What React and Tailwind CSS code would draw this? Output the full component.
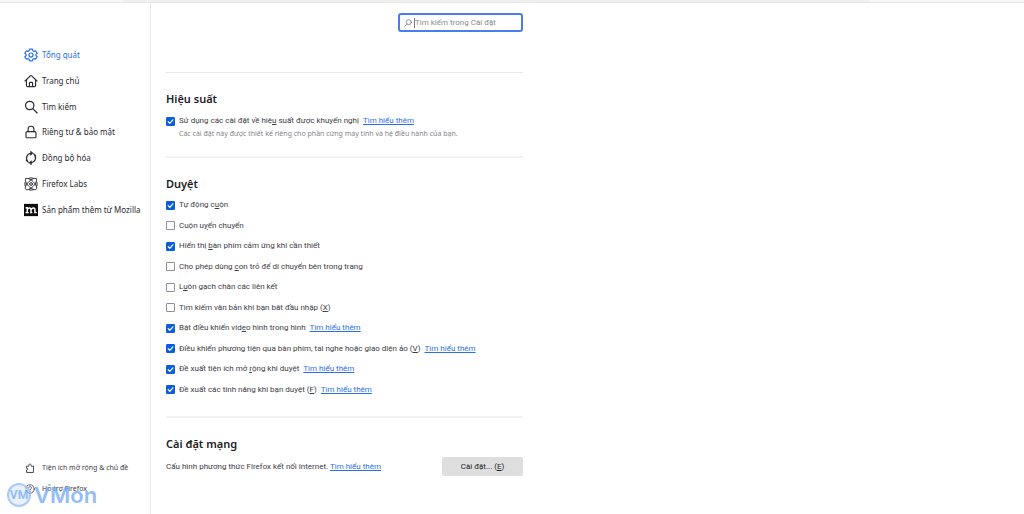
import React from "react";

const stroke = {
  fill: "none",
  stroke: "currentColor",
  strokeLinecap: "round",
  strokeLinejoin: "round",
};

function GearIcon() {
  return (
    <svg viewBox="0 0 16 16" className="size-[14px]" {...stroke} strokeWidth="1.400">
      <path d="M6.4 1.2h3.2l.5 1.9 1.2.7 1.9-.6 1.9 2.8-1.5 1.3v1.4l1.5 1.3-1.9 2.8-1.9-.6-1.2.7-.5 1.9H6.4l-.5-1.9-1.2-.7-1.9.6L.9 10l1.5-1.3V7.300L.9 6l1.900-2.800 1.900.6 1.200-.7z" />
      <circle cx="8" cy="8" r="2.300" />
    </svg>
  );
}

function HomeIcon() {
  return (
    <svg viewBox="0 0 16 16" className="size-[14px]" {...stroke} strokeWidth="1.3">
      <path d="M1.200 8 7.200 2.100a1.200 1.200 0 0 1 1.600 0L14.800 8" />
      <path d="M2.800 7v6.200c0 .8.500 1.300 1.300 1.300h7.800c.8 0 1.300-.5 1.300-1.300V7" />
      <path d="M6.200 14.300v-4c0-.5.300-.8.800-.8h2c.5 0 .8.300.8.800v4" />
    </svg>
  );
}

function SearchIcon() {
  return (
    <svg viewBox="0 0 16 16" className="size-[14px]" {...stroke} strokeWidth="1.4">
      <circle cx="6.500" cy="6.300" r="4.800" />
      <path d="m10 9.800 5 5" />
    </svg>
  );
}

function LockIcon() {
  return (
    <svg viewBox="0 0 16 16" className="size-[14px]" {...stroke} strokeWidth="1.3">
      <rect x="2.300" y="7.600" width="11.400" height="7" rx="1.300" />
      <path d="M4.700 7.500V4.700a3.300 3.300 0 0 1 6.600 0v2.800" />
    </svg>
  );
}

function SyncIcon() {
  return (
    <svg viewBox="0 0 16 16" className="size-[14px]" {...stroke} strokeWidth="1.500">
      <path d="M7.500 2.700a5.400 5.400 0 0 0-4 8M8.500 13.300a5.400 5.400 0 0 0 4-8" />
      <path d="M7.500.4v4.600L10.300 2.700zM8.500 15.600V11l-2.800 2.300z" fill="currentColor" strokeWidth=".6" />
      <path d="M2.800 10.600 4.800 12.700M13.200 5.400l-2-2.100" />
    </svg>
  );
}

function LabsIcon() {
  return (
    <svg viewBox="0 0 16 16" className="size-[14px]" {...stroke} strokeWidth="1.100">
      <path d="M2 2c1.500-1.500 5.500.4 8.600 3.500S15.500 12.500 14 14s-5.500-.4-8.600-3.500S.5 3.500 2 2z" />
      <path d="M14 2c1.500 1.500-.4 5.500-3.500 8.600S3.500 15.500 2 14s.4-5.500 3.500-8.600S12.500.5 14 2z" />
      <circle cx="8" cy="8" r="1.600" />
      <path d="M5.800 1.300a7 7 0 0 1 4.400 0M5.800 14.700a7 7 0 0 0 4.400 0M1.200 6a7 7 0 0 0 0 4M14.800 6a7 7 0 0 1 0 4" />
    </svg>
  );
}

function MozillaIcon() {
  return (
    <svg viewBox="0 0 16 16" className="size-[14px]">
      <path fill="#0c0c0d" d="M0 1h16v14H0z" />
      <path
        fill="none"
        stroke="#fff"
        strokeWidth="1.700"
        d="M1.800 5.400h1.900v5.300M1.800 11h3.500M3.700 7.500c.6-1.600 3.800-3.200 4.300-.3V11M7 11h2.500M8.200 7.500c.6-1.600 3.900-3.200 4.300-.3V11h2"
      />
    </svg>
  );
}

function PuzzleIcon() {
  return (
    <svg viewBox="0 0 16 16" className="size-[10px]" {...stroke} strokeWidth="1.500">
      <path d="M2.500 14.500v-3.300c2.500.6 3-3 0-2.700V5h3.700c-1-4.500 4.500-4.500 3.600 0h3.700v9.500z" />
    </svg>
  );
}

function HelpIcon() {
  return (
    <svg viewBox="0 0 16 16" className="size-[10px]" {...stroke} strokeWidth="1.300">
      <circle cx="8" cy="8" r="6.800" />
      <path d="M5.700 6.300c.1-3.200 4.800-2.800 4.600 0 0 1.400-2.300 1.500-2.300 3.200M8 11.700v.3" />
    </svg>
  );
}

const categories = [
  { label: "Tổng quát", Icon: GearIcon, active: true },
  { label: "Trang chủ", Icon: HomeIcon },
  { label: "Tìm kiếm", Icon: SearchIcon },
  { label: "Riêng tư & bảo mật", Icon: LockIcon },
  { label: "Đồng bộ hóa", Icon: SyncIcon },
  { label: "Firefox Labs", Icon: LabsIcon },
  { label: "Sản phẩm thêm từ Mozilla", Icon: MozillaIcon },
];

const browsing = [
  { id: "autoscroll", checked: true, text: ["Tự động c", "u", "ộn"] },
  { id: "smooth", checked: false, text: ["Cuộn u", "y", "ển chuyển"] },
  { id: "keyboard", checked: true, text: ["Hiển thị ", "b", "àn phím cảm ứng khi cần thiết"] },
  { id: "cursor", checked: false, text: ["Cho phép dùng ", "c", "on trỏ để di chuyển bên trong trang"] },
  { id: "underline", checked: false, text: ["L", "u", "ôn gạch chân các liên kết"] },
  { id: "find", checked: false, text: ["Tìm kiếm văn bản khi bạn bắt đầu nhập (", "X", ")"] },
  { id: "pip", checked: true, link: true, text: ["Bật điều khiển vid", "e", "o hình trong hình"] },
  { id: "media", checked: true, link: true, text: ["Điều khiển phương tiện qua bàn phím, tai nghe hoặc giao diện ảo (", "V", ")"] },
  { id: "extensions", checked: true, link: true, text: ["Đề xuất tiện ích mở ", "r", "ộng khi duyệt"] },
  { id: "features", checked: true, link: true, text: ["Đề xuất các tính năng khi bạn duyệt (", "F", ")"] },
];

function LearnMore() {
  return (
    <a href="#learn-more" className="whitespace-nowrap text-[#2b6fe8] underline">
      Tìm hiểu thêm
    </a>
  );
}

function CheckRow({ id, checked, text, link }) {
  return (
    <div className="flex items-center gap-1">
      <span className="grid shrink-0">
        <input
          id={id}
          type="checkbox"
          defaultChecked={checked}
          className="peer col-start-1 row-start-1 size-[9px] appearance-none rounded-[1px] border border-[#8f8f9d] bg-white checked:border-[#0a5fe0] checked:bg-[#0a5fe0]"
        />
        <svg
          viewBox="0 0 9 9"
          className="pointer-events-none invisible col-start-1 row-start-1 size-[9px] peer-checked:visible"
          {...stroke}
          stroke="#fff"
          strokeWidth="1.200"
        >
          <path d="m2.200 4.700 1.600 1.600 3.100-3.500" />
        </svg>
      </span>
      <label htmlFor={id} className="whitespace-nowrap">
        {text[0]}
        <u>{text[1]}</u>
        {text[2]}
      </label>
      {link && <LearnMore />}
    </div>
  );
}

function Heading({ children }) {
  return (
    <h2 className="font-['Noto_Sans',sans-serif] text-[11px] leading-4 font-semibold text-[#1c1c22]">
      {children}
    </h2>
  );
}

export default function App() {
  return (
    <div
      lang="vi"
      className="relative flex min-h-screen flex-col bg-white font-['Noto_Sans',sans-serif] text-[8px] leading-[12px] text-[#3c3c44]"
    >
      <div className="flex h-[3px] border-b border-[#e6e6e6] bg-[#f8f8f8]">
        <div className="mr-[15%] ml-[12%] flex-1 bg-[#f0f0f0]" />
      </div>
      <div className="flex flex-1">
        <aside className="flex w-[151px] shrink-0 flex-col justify-between border-r border-[#e8e8e8] pt-[39px] pb-[19px] pl-6">
          <nav className="grid min-h-[181px]">
            {categories.map(({ label, Icon, active }) => (
              <a
                key={label}
                href="#category"
                className={
                  active
                    ? "flex items-center gap-1 whitespace-nowrap text-[#2b6fe8]"
                    : "flex items-center gap-1 whitespace-nowrap text-[#2a2a32]"
                }
              >
                <Icon />
                {label}
              </a>
            ))}
          </nav>
          <nav className="flex flex-col gap-[9px] pl-px text-[7px]">
            <a href="#addons" className="flex items-center gap-[7px] whitespace-nowrap">
              <PuzzleIcon />
              Tiện ích mở rộng &amp; chủ đề
            </a>
            <a href="#support" className="flex items-center gap-[7px] whitespace-nowrap">
              <HelpIcon />
              Hỗ trợ Firefox
            </a>
          </nav>
        </aside>

        <main className="flex-1 pt-[10px] pl-[15px] font-['Roboto','Noto_Sans',sans-serif]">
          <div className="max-w-[357px]">
            <label className="ml-auto flex h-[19px] w-[125px] items-center gap-[2px] rounded-[3px] border-2 border-[#4a7cf0] bg-white pl-1">
              <svg viewBox="0 0 16 16" className="size-[8px] shrink-0 text-[#77777f]" {...stroke} strokeWidth="1.500">
                <circle cx="9.500" cy="6.500" r="5" />
                <path d="m5.800 10.200-4.300 4.300" />
              </svg>
              <span className="h-[10px] w-px shrink-0 bg-[#77777f]" />
              <input
                type="search"
                aria-label="Tìm kiếm trong Cài đặt"
                placeholder="Tìm kiếm trong Cài đặt"
                className="-ml-[2px] w-full min-w-0 bg-transparent outline-none placeholder:text-[#8a8a90]"
              />
            </label>

            <section className="mt-10 border-t border-[#e6e6e6] pt-[18px]">
              <Heading>Hiệu suất</Heading>
              <div className="mt-2">
                <CheckRow id="performance" checked link text={["Sử dụng các cài đặt về hiệ", "u", " suất được khuyến nghị"]} />
              </div>
              <p className="mt-px pl-[13px] font-['Noto_Sans',sans-serif] text-[7px] leading-[12px] text-[#85858c]">
                Các cài đặt này được thiết kế riêng cho phần cứng máy tính và hệ điều hành của bạn.
              </p>
            </section>

            <section className="mt-4 border-t-2 border-[#f2f2f2] pt-[18px]">
              <Heading>Duyệt</Heading>
              <div className="mt-[3px] grid min-h-[205px]">
                {browsing.map((item) => (
                  <CheckRow key={item.id} {...item} />
                ))}
              </div>
            </section>

            <section className="mt-4 border-t-2 border-[#f2f2f2] pt-[18px]">
              <Heading>Cài đặt mạng</Heading>
              <div className="mt-[5px] flex items-center justify-between">
                <p>
                  Cấu hình phương thức Firefox kết nối internet. <LearnMore />
                </p>
                <button type="button" className="h-[19px] w-[81px] rounded-[2px] bg-[#dedede] text-[#1c1c22]">
                  Cài đặt... (<u>E</u>)
                </button>
              </div>
            </section>
          </div>
        </main>
      </div>

      <div className="pointer-events-none absolute bottom-[7px] left-[7px] flex items-center gap-[3px] text-[#6fa8f5] opacity-75">
        <span className="grid size-[24px] place-items-center rounded-full border-2 border-[#8dbaf8] bg-[#dbe9fb]/80 font-['Liberation_Sans_Narrow','Roboto',sans-serif] text-[12px] leading-none font-bold">
          VM
        </span>
        <span className="font-['Inter',sans-serif] text-[22px] leading-6 font-semibold">VMon</span>
      </div>
    </div>
  );
}
